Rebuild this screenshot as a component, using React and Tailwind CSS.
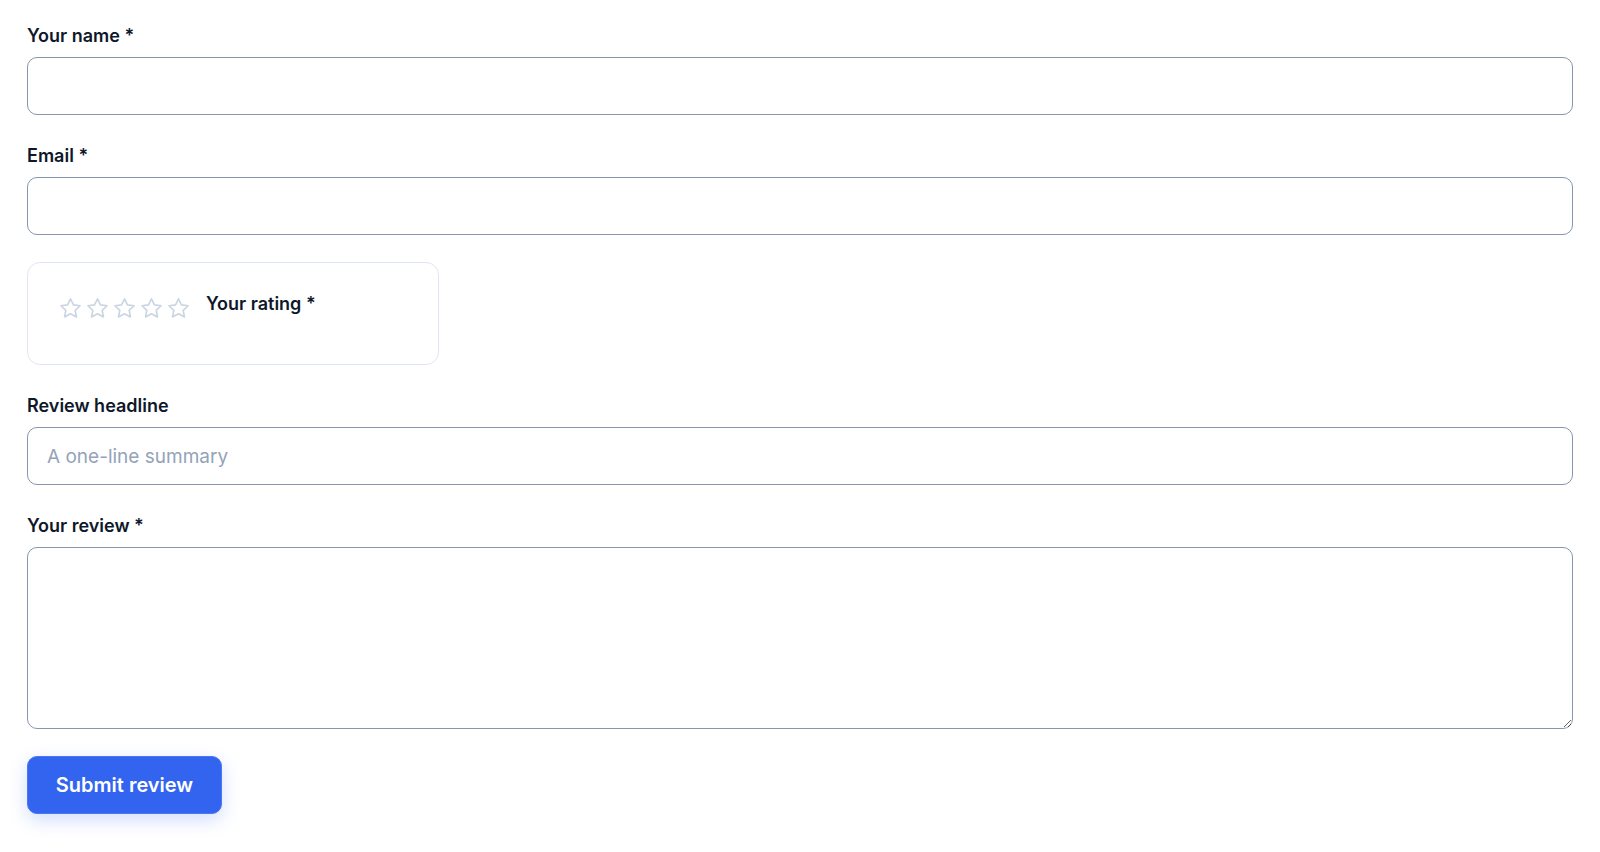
import React from "react";

function Star() {
  return (
    <svg width="23" height="23" viewBox="0 0 24 24" fill="none" stroke="#cbd5e1" strokeWidth="1.7" strokeLinejoin="round">
      <path d="M12 1.9l3.05 6.35 6.95.85-5.12 4.8 1.35 6.9L12 17.45 5.77 20.8l1.35-6.9L2 9.1l6.95-.85L12 1.9z" />
    </svg>
  );
}

function Label({ children }) {
  return (
    <label className="block text-[18px] leading-[27px] font-semibold text-[#0f172a] mb-[8px]">
      {children}
    </label>
  );
}

const inputCls =
  "block w-full h-[58px] rounded-[10px] border-[1.5px] border-[#8796ac] bg-white px-[19px] text-[19px] text-[#0f172a] placeholder:text-[#94a3b8] outline-none";

export default function App() {
  return (
    <div
      className="min-h-screen bg-white px-[27px] pt-[22px] pb-[27px]"
      style={{ fontFamily: "Inter, 'Noto Sans', sans-serif" }}
    >
      <form className="flex flex-col gap-[27px]" onSubmit={(e) => e.preventDefault()}>
        <div>
          <Label>Your name *</Label>
          <input className={inputCls} type="text" />
        </div>
        <div>
          <Label>Email *</Label>
          <input className={inputCls} type="email" />
        </div>
        <div className="w-[412px] h-[103px] rounded-[13px] border-[1.5px] border-[#dfe6f3] pl-[31px] pt-[27px]">
          <div className="flex items-start gap-[16px]">
            <div className="flex gap-[4px] mt-[7px]">
              <Star />
              <Star />
              <Star />
              <Star />
              <Star />
            </div>
            <span className="text-[18px] leading-[27px] font-semibold text-[#0f172a]">Your rating *</span>
          </div>
        </div>
        <div>
          <Label>Review headline</Label>
          <input className={inputCls} type="text" placeholder="A one-line summary" />
        </div>
        <div>
          <Label>Your review *</Label>
          <textarea className="block w-full h-[182px] rounded-[10px] border-[1.5px] border-[#8796ac] bg-white px-[19px] py-[14px] text-[18px] text-[#0f172a] outline-none" />
        </div>
        <div>
          <button
            type="submit"
            className="h-[58px] w-[195px] rounded-[10px] bg-[#3264f0] border border-[#4a78f2] text-white text-[20px] font-semibold shadow-[0_6px_18px_rgba(50,100,240,0.22)]"
          >
            Submit review
          </button>
        </div>
      </form>
    </div>
  );
}
